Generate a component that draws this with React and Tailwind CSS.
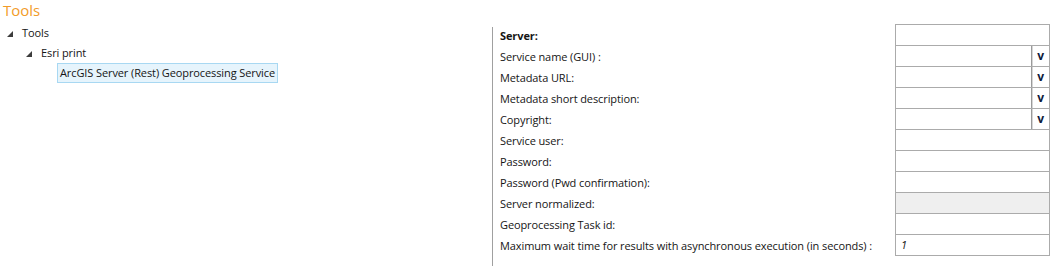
import React from "react";

const Tri = () => (
  <svg width="6" height="6" viewBox="0 0 6 6" className="block">
    <polygon points="6,0 6,6 0,6" fill="#3c3c3c" />
  </svg>
);

const rows = [
  { label: "Server:", bold: true, type: "text" },
  { label: "Service name (GUI) :", type: "combo" },
  { label: "Metadata URL:", type: "combo" },
  { label: "Metadata short description:", type: "combo" },
  { label: "Copyright:", type: "combo" },
  { label: "Service user:", type: "text" },
  { label: "Password:", type: "text" },
  { label: "Password (Pwd confirmation):", type: "text" },
  { label: "Server normalized:", type: "disabled" },
  { label: "Geoprocessing Task id:", type: "text" },
  { label: "Maximum wait time for results with asynchronous execution (in seconds) :", type: "value", value: "1" },
];

export default function App() {
  return (
    <div className="w-[1053px] h-[266px] bg-white flex flex-col overflow-hidden font-['Segoe_UI','Open_Sans',sans-serif] text-[11px] tracking-[-0.1px] text-[#151515]">
      <div className="h-[23px] pl-[3px] text-[15px] tracking-normal leading-[21px] text-[#f29b28]">Tools</div>
      <div className="flex flex-1">
        <div className="w-[492px] flex flex-col">
          <div className="h-[20px] flex items-center pt-[1px]">
            <div className="w-[22px] pl-[7px]"><Tri /></div>
            <span>Tools</span>
          </div>
          <div className="h-[20px] flex items-center pt-[1px]">
            <div className="w-[41px] pl-[26px]"><Tri /></div>
            <span>Esri print</span>
          </div>
          <div className="h-[20px] flex items-center pl-[57px]">
            <div className="h-[20px] flex items-center px-[2px] pt-[1px] border border-[#a8d8f2] bg-[#e6f4fc] whitespace-nowrap">
              ArcGIS Server (Rest) Geoprocessing Service
            </div>
          </div>
        </div>
        <div className="w-px bg-[#a0a0a0] mt-[4px]" />
        <div className="pl-[7px] pt-[1px]">
          <div className="grid grid-cols-[395px_155px]">
            {rows.map((r, i) => (
              <React.Fragment key={i}>
                <div className={`h-[21px] flex items-center pt-[4px] whitespace-nowrap ${r.bold ? "font-bold" : ""}`}>{r.label}</div>
                <div
                  className={`flex border-t border-x border-[#ababab] ${i === rows.length - 1 ? "h-[22px] border-b" : "h-[21px]"} ${r.type === "disabled" ? "bg-[#efefef]" : "bg-white"}`}
                >
                  {r.type === "combo" ? (
                    <>
                      <div className="flex-1" />
                      <div className="w-[18px] border-l border-[#9a9a9a] flex items-center justify-center font-bold text-[12px] text-[#0f1a3c] shadow-[inset_1px_0_0_#d6d6d6]">
                        v
                      </div>
                    </>
                  ) : r.type === "value" ? (
                    <div className="pl-[5px] flex items-center italic text-[11px]">{r.value}</div>
                  ) : null}
                </div>
              </React.Fragment>
            ))}
          </div>
        </div>
      </div>
    </div>
  );
}
